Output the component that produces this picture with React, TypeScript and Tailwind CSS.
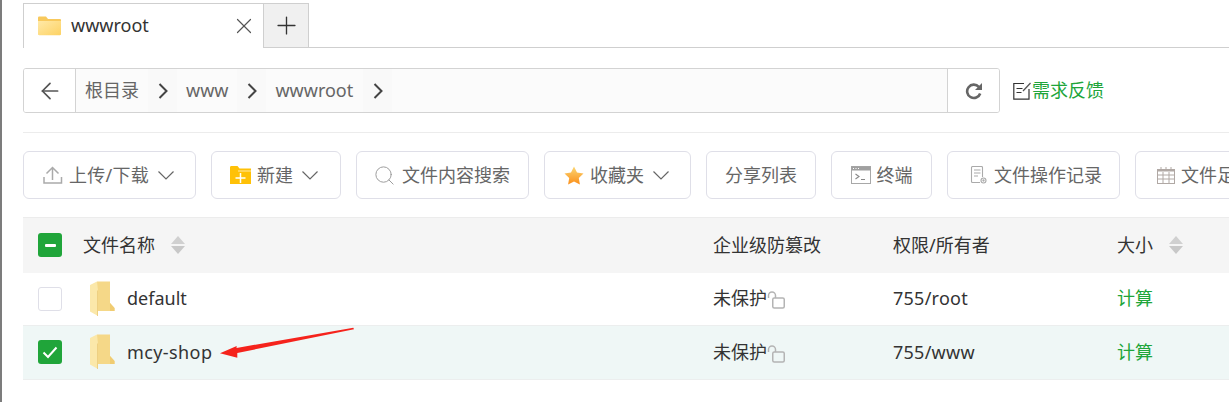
import { ArrowLeft, Plus, Search, X } from 'lucide-react'
import type { ReactNode } from 'react'

const FONT = "font-['Noto_Sans','Noto_Sans_CJK_SC',sans-serif]"

const TabFolder = () => (
  <svg width="23" height="20" viewBox="0 0 23 20" aria-hidden="true">
    <defs>
      <linearGradient id="tabFolder" x1="0" y1="0" x2="1" y2="1">
        <stop offset="0" stopColor="#ffe9a8" />
        <stop offset="1" stopColor="#fdd263" />
      </linearGradient>
    </defs>
    <path d="M0 2C0 .8.6.5 1.500.5H8L10 3h11.800c.8 0 1.200.5 1.200 1.200V6H0z" fill="#f8c95c" />
    <path d="M0 5h23v13c0 .8-.5 1.200-1.200 1.200H1.200C.4 19.200 0 18.800 0 18z" fill="url(#tabFolder)" />
  </svg>
)

const RowFolder = () => (
  <svg width="25" height="36" viewBox="0 0 25 36" aria-hidden="true">
    <path d="M7 .5H20V22L24.500 27V30H7z" fill="#f5d888" />
    <path d="M0 4 7 .5 8 10V35L0 30.500z" fill="#fbe8aa" />
    <path d="M8 10V35L7.200 35V9z" fill="#ecca78" />
    <path d="M20 22V30H24.500V27z" fill="#f0cc72" />
  </svg>
)

const SortIcon = () => (
  <svg width="14" height="18" viewBox="0 0 14 18" aria-hidden="true" className="ml-[16px]">
    <path d="M7 0 14 8H0z" fill="#d0d0d0" />
    <path d="M7 18 14 10H0z" fill="#c8c8c8" />
  </svg>
)

const LockIcon = () => (
  <svg width="18" height="18" viewBox="0 0 18 18" fill="none" stroke="#b4b4b4" strokeWidth="1.500" aria-hidden="true" className="mt-[3px]">
    <rect x="5.750" y="7" width="11.500" height="10" rx="1.500" />
    <path d="M1.500 7V4.500a3.500 3.500 0 0 1 7 0V7" />
  </svg>
)

const UploadIcon = () => (
  <svg width="20" height="18" viewBox="0 0 20 18" fill="none" stroke="#aaa" strokeWidth="1.500" aria-hidden="true">
    <path d="M9.500 14V1.500M3.500 7.500l6-6 6 6" />
    <path d="M1 11v6h17.500v-6" />
  </svg>
)

const NewFolderIcon = () => (
  <svg width="21" height="18" viewBox="0 0 21 18" aria-hidden="true">
    <path d="M0 1.500C0 .5.500 0 1.500 0h6l2 2.500H21V18H0z" fill="#ffc107" />
    <path d="M8 5h13" stroke="#ffe9a8" strokeWidth="1" />
    <path d="M10.500 7v10M5.500 12h10" stroke="#fff" strokeWidth="1.500" />
  </svg>
)

const StarIcon = () => (
  <svg width="20" height="19" viewBox="0 0 20 19" aria-hidden="true">
    <defs>
      <linearGradient id="star" x1="0" y1="0" x2="0" y2="1">
        <stop offset="0" stopColor="#fbd774" />
        <stop offset="1" stopColor="#fb8f1a" />
      </linearGradient>
    </defs>
    <path d="M10 .5 13 6.500l6.500 1-4.700 4.500 1.100 6.500L10 15.500l-5.900 3L5.200 12 .5 7.500l6.500-1z" fill="url(#star)" />
  </svg>
)

const TerminalIcon = () => (
  <svg width="20" height="18" viewBox="0 0 20 18" fill="none" aria-hidden="true">
    <rect x="0.500" y="0.500" width="19" height="17" fill="#fff" stroke="#a8a8a8" />
    <rect x="0.500" y="0.500" width="19" height="4" fill="#a0a0a0" />
    <path d="M2 2.500h1M4.500 2.500h1M7 2.500h1" stroke="#fff" />
    <path d="M4.500 8 8 10.500 4.500 13M10 13.500h4" stroke="#888" strokeWidth="1.100" />
  </svg>
)

const LogIcon = () => (
  <svg width="18" height="18" viewBox="0 0 18 18" fill="none" stroke="#aaa" strokeWidth="1.100" aria-hidden="true">
    <path d="M10 16.500H2.500a1 1 0 0 1-1-1v-14a1 1 0 0 1 1-1h9a1 1 0 0 1 1 1V11" />
    <path d="M4 4h6.500M4 7h6.500M4 10h4" />
    <circle cx="13.500" cy="14.500" r="2.500" />
    <circle cx="13.500" cy="14.500" r=".6" fill="#aaa" />
  </svg>
)

const CalendarIcon = () => (
  <svg width="18" height="17" viewBox="0 0 18 17" fill="none" stroke="#b0a8a4" aria-hidden="true">
    <rect x="0.500" y="2.500" width="17" height="14" />
    <path d="M.5 3.500h17" strokeWidth="2" />
    <path d="M4 0v3M9 0v3M14 0v3M.5 8h17M.5 12h17M6 5v11M12 5v11" />
  </svg>
)

const FeedbackIcon = () => (
  <svg width="18" height="18" viewBox="0 0 18 18" fill="none" stroke="#333" strokeWidth="1.200" aria-hidden="true">
    <path d="M11 1.500H.8v15.700h15.200V7" />
    <path d="M3.500 6.500h6M3.500 10.500h5" />
    <path d="M10 9l7.500-8" stroke="#555" />
  </svg>
)

const RefreshIcon = () => (
  <svg width="18" height="18" viewBox="0 0 18 18" fill="none" aria-hidden="true">
    <path d="M15.200 11.500a6.700 6.700 0 1 1-1.400-6.700" stroke="#666" strokeWidth="2.600" />
    <path d="M17 1v7h-7z" fill="#666" />
  </svg>
)

const Caret = () => (
  <svg width="16" height="9" viewBox="0 0 16 9" fill="none" stroke="#666" strokeWidth="1.200" aria-hidden="true" className="ml-[3px] mt-px">
    <path d="M.5.5 8 8 15.500.5" />
  </svg>
)

const CrumbChevron = () => (
  <svg width="10" height="16" viewBox="0 0 10 16" fill="none" stroke="#444" strokeWidth="2" aria-hidden="true">
    <path d="M1.500 1 8.500 8l-7 7" />
  </svg>
)

type ToolProps = { icon?: ReactNode; label: string; caret?: boolean; width: string; pad?: string; tracking?: string }

const ToolButton = ({ icon, label, caret, width, pad = 'justify-center', tracking = '' }: ToolProps) => (
  <button
    type="button"
    className={`flex h-12 shrink-0 items-center gap-[6px] rounded-[6px] border border-[#dfdfe8] bg-white text-[18px] text-[#666] ${pad} ${width}`}
  >
    {icon}
    <span className={`whitespace-nowrap ${tracking}`}>{label}</span>
    {caret && <Caret />}
  </button>
)

const Crumb = ({ label, pad }: { label: string; pad: string }) => (
  <div className="flex h-full items-center">
    <span className={`flex h-full items-center bg-[#fbfbfb] text-[18px] text-[#666] ${pad}`}>{label}</span>
    <span className="flex h-full w-[29px] items-center justify-center bg-[#f9f9f9]">
      <CrumbChevron />
    </span>
  </div>
)

const Checkbox = ({ state }: { state: 'none' | 'some' | 'all' }) => {
  if (state === 'none') {
    return <span className="block size-6 rounded-[3px] border border-[#dfdfe8] bg-white" />
  }
  return (
    <span className="flex size-6 items-center justify-center rounded-[3px] bg-[#20a53a]">
      {state === 'some' ? (
        <span className="h-[3px] w-[11px] rounded-[1px] bg-white" />
      ) : (
        <svg width="16" height="13" viewBox="0 0 16 13" fill="none" stroke="#fff" strokeWidth="2" aria-hidden="true">
          <path d="M1.500 6.500 6 11l8.500-9.500" />
        </svg>
      )}
    </span>
  )
}

const Row = ({ name, owner, selected }: { name: string; owner: string; selected?: boolean }) => (
  <div className={`flex items-center border-b border-[#eceeee] pb-px text-[18px] text-[#333] ${selected ? 'h-[54px] bg-[#eff7f6]' : 'h-[53px] bg-white'}`}>
    <div className="ml-[15px] w-[52px] shrink-0">
      <Checkbox state={selected ? 'all' : 'none'} />
    </div>
    <RowFolder />
    <span className={`ml-[12px] w-[586px] shrink-0 ${selected ? 'tracking-[0.4px]' : ''}`}>{name}</span>
    <span className="flex w-[180px] shrink-0 items-center">
      未保护
      <LockIcon />
    </span>
    <span className="w-[224px] shrink-0 tracking-[0.25px]">{owner}</span>
    <span className="text-[#20a53a]">计算</span>
  </div>
)

export default function App() {
  return (
    <div className={`h-[402px] w-[1229px] overflow-hidden border-l-2 border-[#7c7c7c] bg-white pl-[21px] ${FONT}`}>
      {/* Tabs */}
      <div className="flex h-[48px] items-end">
        <div className="flex h-[45px] w-[241px] items-center border-x border-t border-[#cfcfcf] bg-white pb-px pl-[14px]">
          <TabFolder />
          <span className="ml-[10px] text-[18px] text-[#333]">wwwroot</span>
          <X size={26} strokeWidth={1.100} className="ml-auto mr-[6px] text-[#555]" />
        </div>
        <div className="flex h-[45px] w-[45px] items-center justify-center border-b border-r border-t border-[#cfcfcf] bg-[#f0f0f0]">
          <Plus size={29} strokeWidth={1.100} className="text-[#333]" />
        </div>
        <div className="h-px flex-1 bg-[#cfcfcf]" />
      </div>

      {/* Path bar */}
      <div className="mt-5 flex h-[45px] items-center">
        <div className="flex h-full w-[977px] overflow-hidden rounded-[3px] border border-[#d3d3d3]">
          <div className="flex w-[52px] shrink-0 items-center justify-center border-r border-[#d3d3d3] bg-white">
            <ArrowLeft size={26} strokeWidth={1.600} className="text-[#555]" />
          </div>
          <div className="flex min-w-0 flex-1 items-center bg-[#fbfbfb]">
            <Crumb label="根目录" pad="pl-[9px] pr-[9px]" />
            <Crumb label="www" pad="px-[9px]" />
            <Crumb label="wwwroot" pad="pl-[9px] pr-[10px]" />
          </div>
          <div className="flex w-[52px] shrink-0 items-center justify-center border-l border-[#d3d3d3] bg-white">
            <RefreshIcon />
          </div>
        </div>
        <div className="ml-[13px] flex items-center text-[18px] text-[#20a53a]">
          <FeedbackIcon />
          <span className="ml-px">需求反馈</span>
        </div>
      </div>

      <div className="mt-[19px] h-px bg-[#ececec]" />

      {/* Toolbar */}
      <div className="mt-[18px] flex gap-[15px]">
        <ToolButton icon={<UploadIcon />} label="上传/下载" caret width="w-[173px]" pad="pl-[19px]" tracking="tracking-[0.25px]" />
        <ToolButton icon={<NewFolderIcon />} label="新建" caret width="w-[130px]" pad="pl-[18px]" />
        <ToolButton icon={<Search size={23} strokeWidth={1} className="text-[#999]" />} label="文件内容搜索" width="w-[173px]" pad="pl-[16px]" />
        <ToolButton icon={<StarIcon />} label="收藏夹" caret width="w-[147px]" pad="pl-[19px]" />
        <ToolButton label="分享列表" width="w-[110px]" />
        <ToolButton icon={<TerminalIcon />} label="终端" width="w-[101px]" />
        <ToolButton icon={<LogIcon />} label="文件操作记录" width="w-[173px]" pad="pl-[22px]" />
        <ToolButton icon={<CalendarIcon />} label="文件足迹" width="w-[148px]" pad="pl-[21px]" />
      </div>

      {/* Table */}
      <div className="mt-[18px]">
        <div className="flex h-[56px] items-center border-t border-[#ececec] bg-[#f5f5f5] pb-px text-[18px] text-[#333]">
          <div className="ml-[15px] w-[45px] shrink-0">
            <Checkbox state="some" />
          </div>
          <span className="flex w-[630px] shrink-0 items-center">
            文件名称
            <SortIcon />
          </span>
          <span className="w-[180px] shrink-0">企业级防篡改</span>
          <span className="w-[224px] shrink-0">权限/所有者</span>
          <span className="flex items-center">
            大小
            <SortIcon />
          </span>
        </div>
        <Row name="default" owner="755/root" />
        <Row name="mcy-shop" owner="755/www" selected />
      </div>

      {/* Annotation arrow */}
      <svg width="140" height="34" viewBox="0 0 140 34" aria-hidden="true" className="absolute left-[218px] top-[326px]">
        <path d="M2 27.300 18.700 20 18.500 22 135.300 1.700 136 3.300 19.300 27 19.300 31.700z" fill="#f5231c" />
      </svg>
    </div>
  )
}
